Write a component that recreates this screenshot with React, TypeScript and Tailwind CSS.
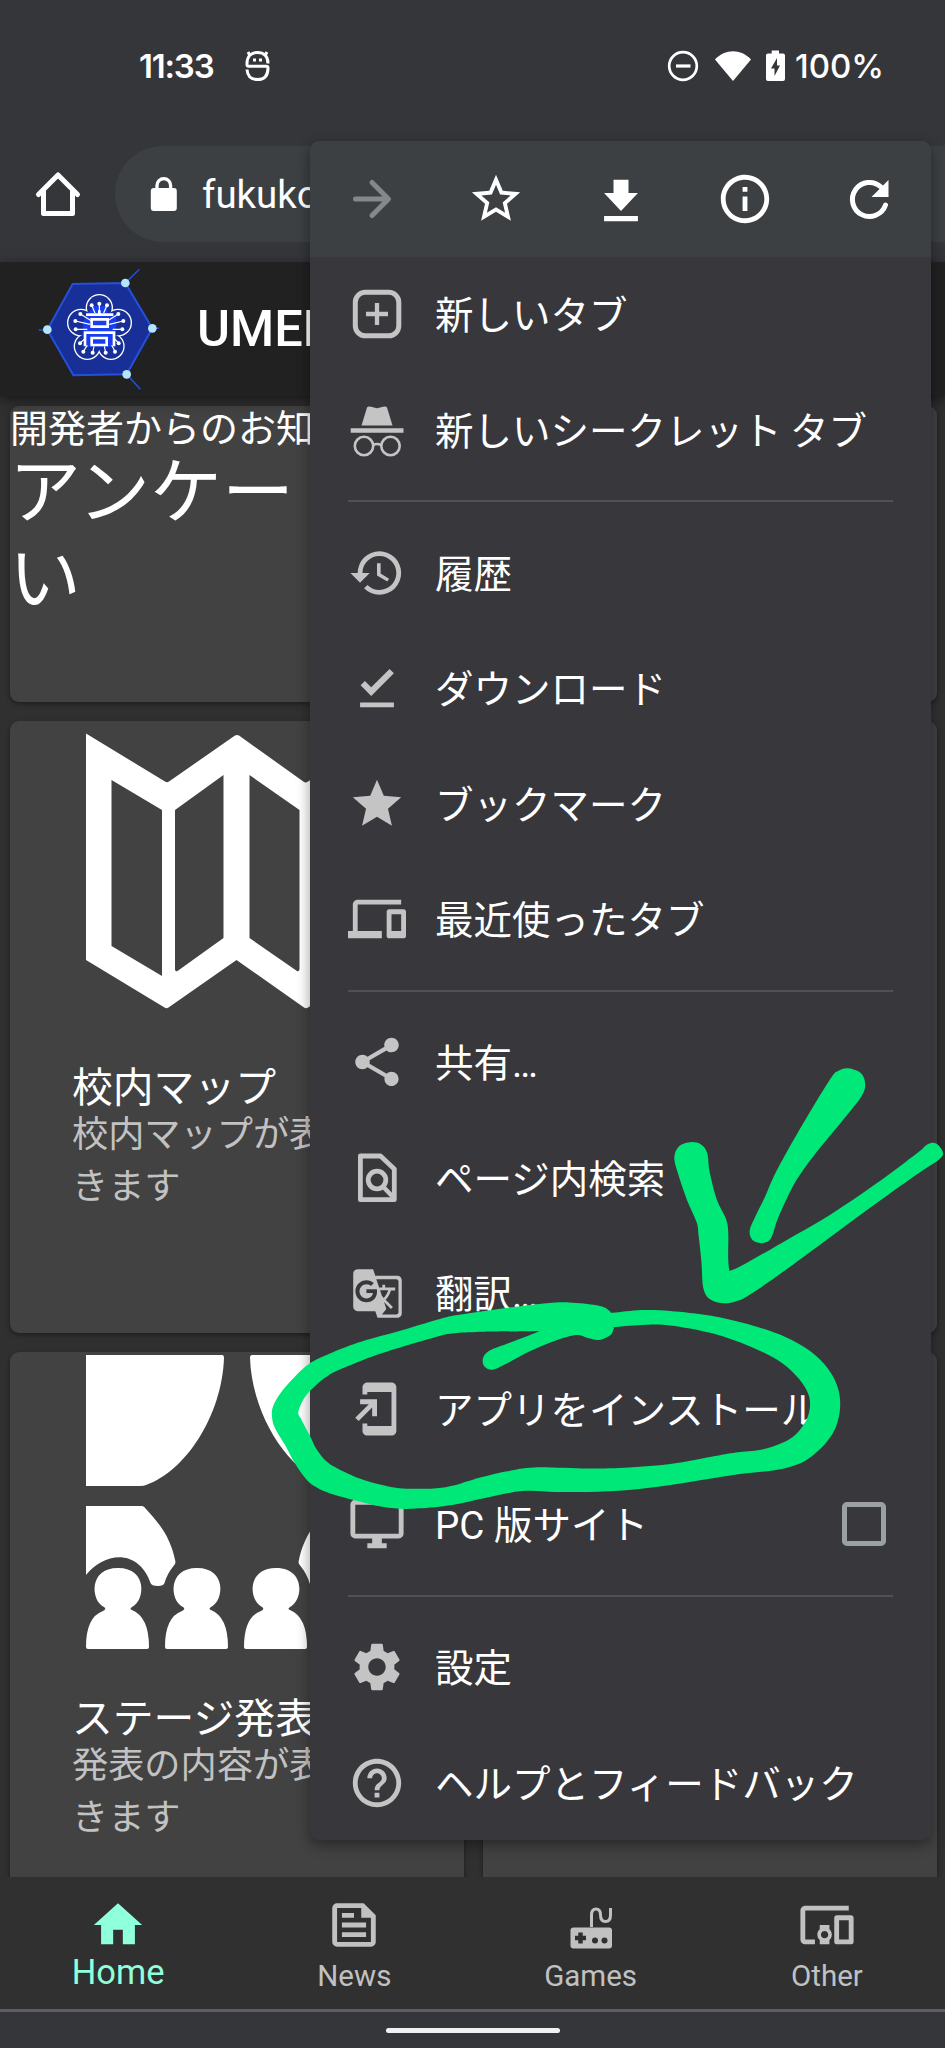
import React from "react";
import {
  MdAddToHomeScreen,
  MdDevices,
  MdDevicesOther,
  MdGTranslate,
  MdHelpOutline,
  MdHistory,
  MdOutlineInfo,
  MdSettings,
  MdShare,
  MdStar,
  MdStarBorder,
} from "react-icons/md";

type Pt = [number, number];

/* Closed Catmull-Rom spline through a list of points. */
function spline(points: Pt[]): string {
  const n = points.length;
  let d = `M${points[0][0]} ${points[0][1]}`;
  for (let i = 0; i < n; i++) {
    const p0 = points[(i - 1 + n) % n];
    const p1 = points[i];
    const p2 = points[(i + 1) % n];
    const p3 = points[(i + 2) % n];
    d += `C${p1[0] + (p2[0] - p0[0]) / 6} ${p1[1] + (p2[1] - p0[1]) / 6} ${p2[0] - (p3[0] - p1[0]) / 6} ${p2[1] - (p3[1] - p1[1]) / 6} ${p2[0]} ${p2[1]}`;
  }
  return d + "Z";
}

const loopOuter: Pt[] = [
  [24, 1054], [-16, 1093], [-48, 1133], [-66, 1168], [-68, 1194], [-61, 1223], [-36, 1268], [-12, 1316], [16, 1358],
  [40, 1378], [73, 1394], [130, 1411], [186, 1426], [243, 1434], [290, 1433], [370, 1424], [450, 1406], [540, 1388],
  [620, 1390], [700, 1390], [800, 1385], [900, 1372], [1000, 1355], [1080, 1342], [1150, 1334], [1200, 1322],
  [1240, 1300], [1280, 1260], [1303, 1220], [1313, 1170], [1308, 1120], [1285, 1070], [1240, 1022], [1180, 985],
  [1100, 955], [1000, 930], [900, 917], [830, 915], [762, 922], [755, 920], [742, 909], [720, 902], [655, 895], [600, 897], [520, 907],
  [400, 925], [350, 935], [250, 967], [150, 997], [80, 1025],
];

const loopInner: Pt[] = [
  [768, 959], [763, 963], [755, 980], [727, 993], [700, 988], [672, 980], [620, 995], [560, 1022], [500, 1056], [468, 1071],
  [448, 1062], [445, 1040], [462, 1020], [510, 1000], [577, 972], [570, 970], [430, 972], [370, 976], [330, 985], [200, 1027],
  [120, 1060], [70, 1085], [35, 1115], [10, 1145], [-4, 1181], [3, 1200], [25, 1245], [40, 1278], [62, 1308],
  [90, 1328], [145, 1355], [200, 1372], [250, 1381], [325, 1381], [370, 1374], [420, 1358], [500, 1337], [570, 1326],
  [700, 1329], [800, 1326], [900, 1317], [1000, 1298], [1060, 1287], [1120, 1280], [1170, 1263], [1205, 1240],
  [1232, 1200], [1240, 1160], [1232, 1125], [1205, 1085], [1160, 1045], [1090, 1008], [1000, 975], [900, 955], [840, 953],
];

const arrowHead: Pt[] = [
  [950, 476], [975, 482], [990, 505], [996, 555], [1013, 625], [1035, 675], [1041, 710], [1041, 780], [1044, 811],
  [1048, 811], [1080, 795], [1170, 740], [1290, 665], [1400, 585], [1500, 505], [1525, 482], [1545, 479], [1562, 500],
  [1555, 520], [1500, 560], [1370, 660], [1200, 795], [1100, 870], [1060, 892], [1028, 897], [995, 885], [980, 855],
  [976, 790], [969, 720], [964, 685], [940, 625], [918, 555], [910, 515], [922, 486],
];

const arrowShaft: Pt[] = [
  [1333, 283], [1365, 297], [1374, 328], [1364, 358], [1330, 405], [1250, 510], [1210, 570], [1185, 620],
  [1162, 675], [1148, 720], [1138, 735], [1120, 740], [1100, 732], [1093, 708], [1105, 675], [1130, 620],
  [1150, 570], [1175, 518], [1230, 415], [1290, 310], [1308, 290],
];

function Scribble() {
  return (
    <svg className="absolute left-0 top-0 z-20" width="945" height="2048" viewBox="0 0 945 2048" fill="#00e877">
      <g transform="translate(300 960) scale(.41135 .38265)">
        <path fillRule="evenodd" d={spline(loopOuter) + spline(loopInner)} />
        <path d={spline(arrowHead)} />
        <path d={spline(arrowShaft)} />
      </g>
    </svg>
  );
}

function StatusBar() {
  return (
    <div className="flex h-[131px] shrink-0 items-start pl-[139px] pr-[64px] pt-[46px] font-['Inter'] text-[33px] font-medium leading-[40px] text-white">
      <div className="w-[74px] whitespace-nowrap font-semibold tracking-[-1.200px]">11:33</div>
      <svg className="ml-[31px] mt-[4px]" width="28" height="32" viewBox="0 0 28 32" fill="none" stroke="#fff" strokeWidth="3">
        <path d="M24 13.500C24 6 19.500 2.400 13.500 2.400S3 6.200 3 13.500V14.800Q3 16.200 5 16.200H22Q24 16.200 24 18C24 26 20 29.600 13.500 29.600S3.500 26 3 19.500M6 5.500L4 2M21 5.500L23 2" />
        <path d="M9 10h3M15 10h3" />
      </svg>
      <div className="ml-auto flex items-start">
        <svg className="mt-[4px]" width="32" height="32" viewBox="0 0 32 32" fill="none" stroke="#fff" strokeWidth="2.700">
          <circle cx="16" cy="16" r="13.800" />
          <path d="M9 16h14.500" strokeWidth="3.200" />
        </svg>
        <svg className="ml-[16px] mt-[4px]" width="36" height="32" viewBox="0 0 36 32" fill="#fff">
          <path d="M18 31L0 9.500C10-1.500 26-1.500 36 9.500Z" />
        </svg>
        <svg className="ml-[15px] mt-[4px]" width="19" height="32" viewBox="0 0 19 32">
          <path fill="#fff" d="M2 3.500H5.700V.500H13V3.500H17Q19 3.500 19 5.500V29Q19 31 17 31H2Q0 31 0 29V5.500Q0 3.500 2 3.500Z" />
          <path fill="#35363a" d="M11 8L5 18.500H8.500V26L14 15.500H11Z" />
        </svg>
        <span className="ml-[10px] w-[86px] whitespace-nowrap">100%</span>
      </div>
    </div>
  );
}

function AddressBar() {
  return (
    <div className="flex h-[131px] shrink-0 items-center pl-[34px] pb-[5px]">
      <svg className="mb-[2px]" width="48" height="48" viewBox="0 0 48 48" fill="none" stroke="#fff" strokeWidth="5" strokeLinecap="round" strokeLinejoin="round">
        <path d="M4.500 25.500L24 6L43.500 25.500" />
        <path d="M9.500 23V44.500H38.500V23" />
      </svg>
      <div className="ml-[33px] flex h-[96px] flex-1 items-center rounded-l-full bg-[#3c4043] pl-[35px]">
        <svg width="28" height="36" viewBox="0 0 28 36">
          <path d="M7 15V9.500a6.800 6.800 0 0 1 13.600 0V15" fill="none" stroke="#fff" strokeWidth="3.300" />
          <rect x=".8" y="12" width="26" height="23" rx="3" fill="#fff" />
        </svg>
        <span className="ml-[24px] mt-[2px] font-['Roboto'] text-[38.500px] leading-[44px] text-white">fukuko</span>
      </div>
    </div>
  );
}

function Logo() {
  return (
    <svg width="126" height="126" viewBox="112 797 370 378">
      <g fill="none" stroke="#2450dc" strokeWidth="4.500">
        <path d="M376 848L418 807M380 1122L421 1167M116 989H142M457 984H477" />
        <path fill="#182f98" strokeWidth="6" d="M218 851L376 848L457 984L380 1122L220 1125L142 988Z" />
      </g>
      <g fill="none" stroke="#fff" strokeWidth="8">
        <circle cx="298" cy="922" r="37" />
        <circle cx="243" cy="967" r="38" />
        <circle cx="354" cy="967" r="38" />
        <circle cx="262" cy="1038" r="37" />
        <circle cx="333" cy="1038" r="37" />
      </g>
      <g fill="#182f98">
        <circle cx="298" cy="922" r="37" />
        <circle cx="243" cy="967" r="38" />
        <circle cx="354" cy="967" r="38" />
        <circle cx="262" cy="1038" r="37" />
        <circle cx="333" cy="1038" r="37" />
        <circle cx="298" cy="985" r="48" />
      </g>
      <path fill="#1a3df0" d="M278 917H322V945H350L345 1040H255L248 965L262 945Z" />
      <g stroke="#fff" strokeWidth="3.500" fill="none">
        <path d="M298 910V940M275 915L285 938M321 915L311 938M241 941L275 962M355 941L322 962M226 962L270 972M370 962L328 972M227 987H262M367 987H338M240 1028L255 1015M356 1028L343 1015M250 1053L262 1035M345 1053L335 1035M278 1057L282 1038M317 1057L313 1038" />
      </g>
      <g fill="#fff">
        <circle cx="298" cy="910" r="6" /><circle cx="275" cy="915" r="6" /><circle cx="321" cy="915" r="6" />
        <circle cx="241" cy="941" r="6" /><circle cx="355" cy="941" r="6" /><circle cx="226" cy="962" r="6" />
        <circle cx="370" cy="962" r="6" /><circle cx="227" cy="987" r="6" /><circle cx="367" cy="987" r="6" />
        <circle cx="240" cy="1029" r="6" /><circle cx="356" cy="1029" r="6" /><circle cx="250" cy="1054" r="6" />
        <circle cx="345" cy="1054" r="6" /><circle cx="278" cy="1057" r="6" /><circle cx="317" cy="1057" r="6" />
      </g>
      <g fill="none" stroke="#fff" strokeWidth="8">
        <path d="M258 943H340M298 930V943M275 957H323V979H275Z" />
        <path d="M255 1038V997H342V1038M275 1013H320V1034H275Z" />
      </g>
      <g fill="#b3e5fc">
        <circle cx="376" cy="848" r="13" />
        <circle cx="457" cy="984" r="13" />
        <circle cx="380" cy="1122" r="13" />
        <circle cx="142" cy="988" r="13" />
      </g>
    </svg>
  );
}

function MapPicture() {
  return (
    <svg className="ml-[76px] mt-[12px] block" width="302" height="276" viewBox="86 733 302 276">
      <path
        fill="#fff"
        fillRule="evenodd"
        d="M86 733.500L165 781.500Q167 783 169 781.500L235 735.500Q237 734.500 239 735.500L304 782Q306 783 308 781.500L388 734V960L308 1007.500Q306 1009 304 1007.500L236.500 960L168.500 1007.500Q166.500 1009 164.500 1007.500L86 960ZM111.500 780V946L162 976V810ZM223.500 775L175 810V969Q175 972 177.500 971L223.500 938ZM249.500 775V938L297 971Q299 972 299.500 969V810Z"
      />
    </svg>
  );
}

const audience: number[] = [118, 197, 276, 355];

function StagePicture() {
  return (
    <svg className="ml-[76px] mt-[3px] block" width="302" height="295" viewBox="86 1355 302 295" fill="#fff">
      <path d="M86 1355H222Q224 1355 224 1358C222 1415 186 1471 146 1485Q144 1486 140 1486H86Z" />
      <path d="M388 1355H252Q250 1355 250 1358C252 1415 288 1471 328 1485Q330 1486 334 1486H388Z" />
      <path d="M86 1506H142Q144 1506 146 1509C160 1524 171 1538 175.500 1562Q175.500 1564 173.500 1566Q167 1574 164.500 1583Q163.500 1586 158 1586Q151.500 1586 150.500 1583C139 1549 105 1551 86 1575Z" />
      <path d="M388 1506H332Q330 1506 328 1509C314 1524 303 1538 298.500 1562Q298.500 1564 300.500 1566Q307 1574 309.500 1583Q310.500 1586 316 1586Q322.500 1586 323.500 1583C335 1549 369 1551 388 1575Z" />
      {audience.map((x) => (
        <path
          key={x}
          transform={`translate(${x - 118} 0)`}
          d="M118 1568C148 1568 145 1601 132 1607Q129 1609 132 1610Q149 1617 149 1647Q149 1649 147 1649H88Q86 1649 86 1647Q86 1617 103 1611Q107 1609 104 1607C91 1601 88 1568 118 1568Z"
        />
      ))}
    </svg>
  );
}

function TileText({ title, lines }: { title: string; lines: string[] }) {
  return (
    <div className="ml-[62px] whitespace-nowrap font-['Noto_Sans_CJK_JP',sans-serif]">
      <div className="text-[40.800px] leading-[46px] text-white">{title}</div>
      <div className="-mt-[3px] text-[36.200px] leading-[52.300px] text-[#c2c2c2]">
        {lines.map((l) => (
          <div key={l}>{l}</div>
        ))}
      </div>
    </div>
  );
}

function Incognito() {
  return (
    <svg width="58" height="58" viewBox="0 0 58 58" fill="currentColor">
      <path d="M13.500 24.500L19 6.500Q20 5 23 5.800L29 7.300L35 5.800Q38 5 39 6.500L44.500 24.500Z" />
      <path d="M2.700 27.300H55.500V31.800H2.700Z" />
      <g fill="none" stroke="currentColor" strokeWidth="2.600">
        <circle cx="16" cy="45" r="9.200" />
        <circle cx="42.500" cy="45" r="9.200" />
        <path d="M25 44Q29 42 33 44" />
      </g>
    </svg>
  );
}

function NewTab() {
  return (
    <svg width="58" height="58" viewBox="0 0 58 58" fill="none" stroke="currentColor">
      <rect x="7.300" y="7.300" width="43.500" height="43.500" rx="10" strokeWidth="5" />
      <path d="M29 18V40M18 29H40" strokeWidth="4.300" />
    </svg>
  );
}

function DownloadDone() {
  return (
    <svg width="58" height="58" viewBox="0 0 24 24" fill="currentColor">
      <path d="M19 5.900L9.600 15.300L5.200 10.900L7 9.100L9.600 11.700L17.200 4.100ZM5 18H19V20H5Z" />
    </svg>
  );
}

function FindInPage() {
  return (
    <svg width="58" height="58" viewBox="0 0 58 58" fill="none" stroke="currentColor" strokeLinejoin="round">
      <path d="M12.400 7H32.500L46.300 20V50.700H12.400Z" strokeWidth="4.800" />
      <circle cx="29" cy="31" r="8.800" strokeWidth="4.800" />
      <path d="M34 36.500L44.500 47.500" strokeWidth="4.500" />
    </svg>
  );
}

function Desktop() {
  return (
    <svg width="58" height="58" viewBox="0 0 24 24" fill="currentColor">
      <path
        fillRule="evenodd"
        d="M3 2H21A2 2 0 0 1 23 4V16A2 2 0 0 1 21 18H14V20H16V22H8V20H10V18H3A2 2 0 0 1 1 16V4A2 2 0 0 1 3 2ZM3 4V16H21V4Z"
      />
    </svg>
  );
}

function MenuRow({ icon, children, end }: { icon: React.ReactNode; children: React.ReactNode; end?: React.ReactNode }) {
  return (
    <div className="flex h-[115.500px] items-center pl-[38px] pr-[45px] text-[#c4c4c4]">
      {icon}
      <span className="mb-[4px] ml-[29px] whitespace-nowrap text-[38.500px] leading-[56px] text-white">{children}</span>
      {end}
    </div>
  );
}

function MenuDivider() {
  return (
    <div className="flex h-[27.500px] items-center px-[38px]">
      <div className="h-[2px] w-full bg-[#505055]" />
    </div>
  );
}

function HeaderIcon({ children }: { children: React.ReactNode }) {
  return <div className="flex flex-1 justify-center">{children}</div>;
}

function Menu() {
  return (
    <div className="absolute left-[310px] top-[141px] z-10 h-[1699px] w-[621px] overflow-hidden rounded-[9px] bg-[#38373c] font-['Noto_Sans_CJK_JP',sans-serif] shadow-[0_5px_14px_rgba(0,0,0,0.4)]">
      <div className="flex h-[115.500px] items-center bg-[#3c4043] text-white">
        <HeaderIcon>
          <svg width="58" height="58" viewBox="0 0 58 58" fill="none" stroke="#85888a" strokeWidth="5" strokeLinecap="round" strokeLinejoin="round">
            <path d="M12.500 29H45M29 12.500L45.500 29L29 45.500" />
          </svg>
        </HeaderIcon>
        <HeaderIcon><MdStarBorder size={58} /></HeaderIcon>
        <HeaderIcon>
          <svg width="58" height="58" viewBox="0 0 24 24" fill="currentColor">
            <path d="M19 9.500H15.100V4H8.900V9.500H5L12 17ZM5 19V21.200H19V19Z" />
          </svg>
        </HeaderIcon>
        <HeaderIcon><MdOutlineInfo size={58} /></HeaderIcon>
        <HeaderIcon>
          <svg width="58" height="58" viewBox="0 0 58 58">
            <path d="M45.500 35A17 17 0 1 1 41 17" fill="none" stroke="#fff" strokeWidth="5" strokeLinecap="round" />
            <path d="M48.500 10V27H31.500Z" fill="#fff" />
          </svg>
        </HeaderIcon>
      </div>
      <MenuRow icon={<NewTab />}>新しいタブ</MenuRow>
      <MenuRow icon={<Incognito />}>新しいシークレット タブ</MenuRow>
      <MenuDivider />
      <MenuRow icon={<MdHistory size={58} />}>履歴</MenuRow>
      <MenuRow icon={<DownloadDone />}>ダウンロード</MenuRow>
      <MenuRow icon={<MdStar size={58} />}>ブックマーク</MenuRow>
      <MenuRow icon={<MdDevices size={58} />}>最近使ったタブ</MenuRow>
      <MenuDivider />
      <MenuRow icon={<MdShare size={58} />}>共有<span className="font-['Roboto'] leading-none">…</span></MenuRow>
      <MenuRow icon={<FindInPage />}>ページ内検索</MenuRow>
      <MenuRow icon={<MdGTranslate size={53} className="mx-[2.500px]" />}>翻訳<span className="font-['Roboto'] leading-none">…</span></MenuRow>
      <MenuRow icon={<MdAddToHomeScreen size={58} />}>アプリをインストール</MenuRow>
      <MenuRow
        icon={<Desktop />}
        end={<span className="ml-auto size-[44px] rounded-[5px] border-[5px] border-[#9aa0a3]" />}
      >
        <span className="font-['Roboto'] leading-none">PC </span>版サイト
      </MenuRow>
      <MenuDivider />
      <MenuRow icon={<MdSettings size={58} />}>設定</MenuRow>
      <MenuRow icon={<MdHelpOutline size={58} />}>ヘルプとフィードバック</MenuRow>
    </div>
  );
}

function NavItem({ icon, label, active }: { icon: React.ReactNode; label: string; active?: boolean }) {
  return (
    <div className={`flex flex-1 flex-col items-center pt-[19px] ${active ? "text-[#8fffdc]" : "text-[#c1c1c1]"}`}>
      {icon}
      <span className={active ? "mt-[-2px] text-[34.500px] leading-[40px]" : "mt-[2px] text-[29.500px] leading-[40px]"}>{label}</span>
    </div>
  );
}

function BottomNav() {
  return (
    <div className="z-[5] flex h-[132px] shrink-0 bg-[#303030] font-['Roboto']">
      <NavItem
        active
        label="Home"
        icon={<svg width="58" height="58" viewBox="0 0 24 24" fill="currentColor"><path d="M10 20v-6h4v6h5v-8h3L12 3 2 12h3v8z" /></svg>}
      />
      <NavItem
        label="News"
        icon={
          <svg width="58" height="58" viewBox="0 0 24 24" fill="currentColor">
            <path fillRule="evenodd" d="M5 3H16L21 8V19A2 2 0 0 1 19 21H5A2 2 0 0 1 3 19V5A2 2 0 0 1 5 3ZM5 5V19H19V9H15V5ZM7 7H12V9H7ZM7 11H17V13H7ZM7 15H17V17H7Z" />
          </svg>
        }
      />
      <NavItem
        label="Games"
        icon={
          <svg width="58" height="58" viewBox="0 0 58 58">
            <path d="M29.500 31V19Q29.500 13 34 13T38.500 19Q38.500 25.500 43.500 25.500T48.500 19V12" fill="none" stroke="currentColor" strokeWidth="3" />
            <rect x="8.500" y="31.500" width="41.500" height="21" rx="3" fill="currentColor" />
            <path d="M13 42H24M18.500 36.500V47.500" stroke="#303030" strokeWidth="4.500" />
            <circle cx="33" cy="44.500" r="3" fill="#303030" />
            <circle cx="42.500" cy="44.500" r="3" fill="#303030" />
          </svg>
        }
      />
      <NavItem label="Other" icon={<MdDevicesOther size={58} />} />
    </div>
  );
}

export default function App() {
  return (
    <div className="relative flex h-[2048px] w-[945px] flex-col overflow-hidden bg-[#35363a]">
      <StatusBar />
      <AddressBar />
      <header className="z-[2] flex h-[134px] shrink-0 items-center bg-[#212121] pl-[36px] shadow-[0_4px_12px_rgba(0,0,0,0.5)]">
        <Logo />
        <span className="ml-[35px] font-['Roboto'] text-[50.500px] font-medium leading-[60px] text-white">UMEH</span>
      </header>
      <main className="flex h-[1481px] shrink-0 flex-col gap-[19px] overflow-hidden bg-[#303030] pl-[10px] pr-[8px] pt-[10px]">
        <section className="h-[296px] shrink-0 rounded-[9px] bg-[#424242] font-['Noto_Sans_CJK_JP',sans-serif] text-white shadow-[0_2px_5px_rgba(0,0,0,0.4)]">
          <div className="whitespace-nowrap text-[38px] leading-[40px]">開発者からのお知</div>
          <div className="-mt-[4px] -ml-px text-[72px] leading-[87px]">
            <div>アンケー</div>
            <div>い</div>
          </div>
        </section>
        <div className="grid h-[612px] shrink-0 grid-cols-2 gap-[19px]">
          <section className="overflow-hidden rounded-[9px] bg-[#424242] shadow-[0_2px_5px_rgba(0,0,0,0.4)]">
            <MapPicture />
            <div className="h-[53px]" />
            <TileText title="校内マップ" lines={["校内マップが表", "きます"]} />
          </section>
          <section className="rounded-[9px] bg-[#424242] shadow-[0_2px_5px_rgba(0,0,0,0.4)]" />
        </div>
        <div className="grid h-[612px] shrink-0 grid-cols-2 gap-[19px]">
          <section className="overflow-hidden rounded-[9px] bg-[#424242] shadow-[0_2px_5px_rgba(0,0,0,0.4)]">
            <StagePicture />
            <div className="h-[43px]" />
            <TileText title="ステージ発表" lines={["発表の内容が表", "きます"]} />
          </section>
          <section className="rounded-[9px] bg-[#424242] shadow-[0_2px_5px_rgba(0,0,0,0.4)]" />
        </div>
      </main>
      <BottomNav />
      <div className="flex h-[39px] shrink-0 justify-center border-t-[3px] border-[#5d5e63] pt-[16px]">
        <div className="h-[5px] w-[174px] rounded-full bg-[#f1f1f1]" />
      </div>
      <Menu />
      <Scribble />
    </div>
  );
}
